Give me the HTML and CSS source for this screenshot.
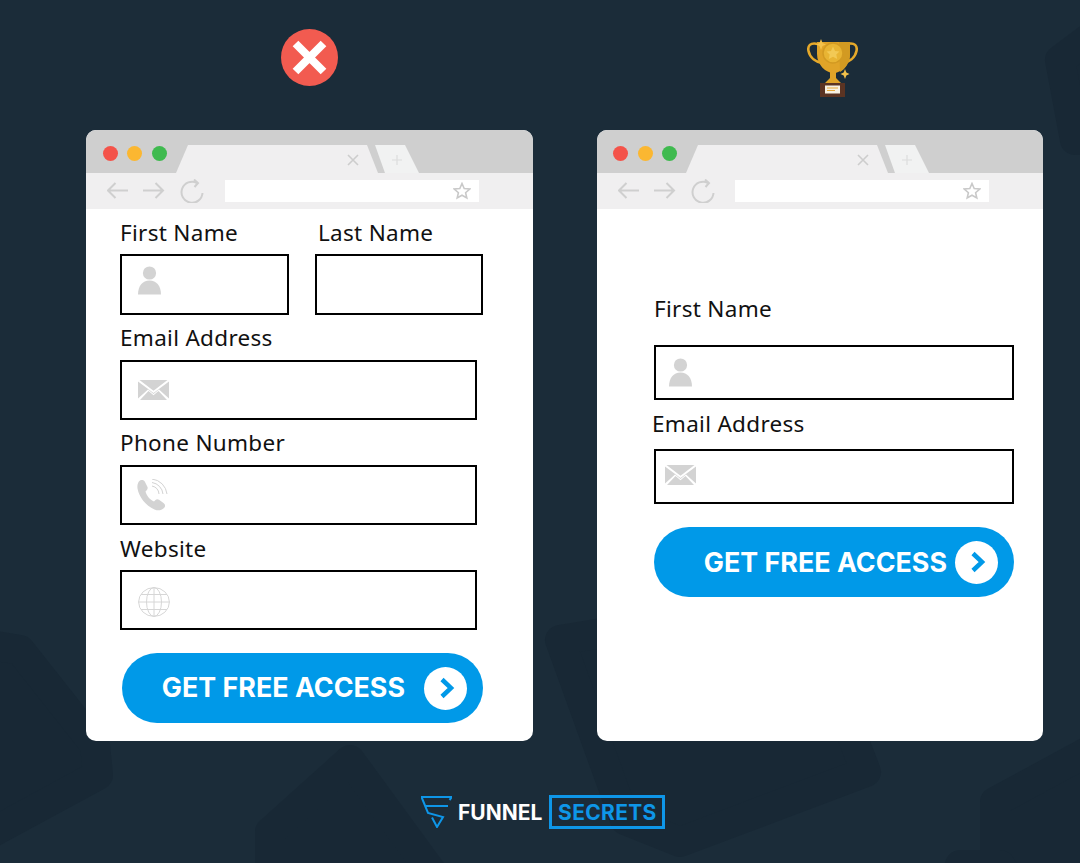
FILE: index.html
```html
<!DOCTYPE html>
<html lang="en">
<head>
  <meta charset="UTF-8">
  <title>Funnel Secrets - Short forms win</title>
  <link rel="stylesheet" href="styles.css">
</head>
<body>
  <!-- Shared icons -->
  <svg class="sprites" width="0" height="0">
    <symbol id="i-person" viewBox="0 0 23 29">
      <circle cx="11.5" cy="7" r="6.6" fill="#d3d3d3"/>
      <path d="M0 28.5C0 20 4.500 14.500 11.500 14.500S23 20 23 28.500Z" fill="#d3d3d3"/>
    </symbol>
    <symbol id="i-mail" viewBox="0 0 31 20">
      <path d="M0 1.500L15.500 13 31 1.500V18.500L21 9.500 15.500 14 10 9.500 0 18.500Z M1.500 0H29.500L15.500 10.800Z M2 20L10.500 11 15.500 15.200 20.500 11 29 20Z" fill="#d3d3d3"/>
    </symbol>
    <symbol id="i-phone" viewBox="0 0 31 32">
      <path d="M3 1.500C5 .5 7 1 8 3L10.500 8C11 9.500 10.500 10.500 9.500 11.500L8.500 12.500C9.500 16.500 13 21 17 22.500L18.500 21C19.500 20 21 20 22 20.800L26.500 24C28.500 25.500 28.500 27.500 27 29C24.500 31.500 21 32 17.500 30.500C8.500 26.500 2 18 .5 9.500C0 6 1 3 3 1.500Z" fill="#d3d3d3"/>
      <path d="M15 7A9 9 0 0 1 22 15M15 3.500A13 13 0 0 1 26 15M15 0A17 17 0 0 1 30 15" fill="none" stroke="#d3d3d3" stroke-width="1"/>
    </symbol>
    <symbol id="i-globe" viewBox="0 0 32 30">
      <g fill="none" stroke="#d6d6d6" stroke-width="1">
        <ellipse cx="16" cy="15" rx="15.400" ry="14.400"/>
        <ellipse cx="16" cy="15" rx="7.500" ry="14.400"/>
        <path d="M16 .5V29.500M.6 15H31.400M3 7.500H29M3 22.500H29"/>
      </g>
    </symbol>
    <symbol id="i-chrome-nav" viewBox="0 0 100 24">
      <g fill="none" stroke="#cfcfcf" stroke-width="2">
        <path d="M1 11.500H21M8.500 4L1 11.500 8.500 19"/>
        <path d="M36 11.500H56M48.500 4L56 11.500 48.500 19"/>
        <path d="M90 4A10.500 10.500 0 1 0 95.500 14"/>
        <path d="M87 .5L91 4 87.500 8"/>
      </g>
    </symbol>
    <symbol id="i-star" viewBox="0 0 18 18">
      <path d="M9 1.500L11.200 6.500 16.700 7 12.600 10.700 13.800 16 9 13.200 4.200 16 5.400 10.700 1.300 7 6.800 6.500Z" fill="none" stroke="#c9c9c9" stroke-width="1.600"/>
    </symbol>
    <symbol id="i-tabs" viewBox="0 0 245 28">
      <path d="M0 28L12 0H191L202 28Z" fill="#f0eff0"/>
      <path d="M172 10L182 20M182 10L172 20" stroke="#cdcdcd" stroke-width="1.600"/>
      <path d="M199 0H229L243 28H209Z" fill="#f1f2f2"/>
      <path d="M221 10V20M216 15H226" stroke="#dcdcdc" stroke-width="1.200"/>
    </symbol>
    <symbol id="i-chevron" viewBox="0 0 16 22">
      <path d="M3 2.500L12 11 3 19.500" fill="none" stroke="#0099e8" stroke-width="4.500"/>
    </symbol>
  </svg>

  <!-- Faint shapes behind everything -->
  <svg class="backdrop" viewBox="0 0 1080 863" aria-hidden="true">
    <g fill="#182835" stroke="#182835" stroke-width="30" stroke-linejoin="round">
      <polygon points="-40,640 20,650 95,745 98,775 -40,850"/>
      <polygon points="350,760 445,890 270,890 270,832"/>
      <polygon points="560,640 800,600 866,772 680,842 625,820"/>
      <polygon points="1100,745 995,802 995,890 1100,890"/>
      <polygon points="955,880 960,865 1000,865 1010,880"/>
      <polygon points="1100,30 1060,60 1075,140 1100,140"/>
    </g>
  </svg>

  <div class="page">
    <div class="verdicts">
      <div class="verdict">
        <svg class="bad-mark" viewBox="0 0 57 57">
          <circle cx="28.500" cy="28.500" r="28.500" fill="#f25b50"/>
          <path d="M14.500 14.500L42.500 42.500M42.500 14.500L14.500 42.500" stroke="#fff" stroke-width="8"/>
        </svg>
      </div>
      <div class="verdict">
        <svg class="trophy" viewBox="0 0 51 58">
          <path d="M11 5C3 3 .5 7 1.500 12 3 19 9 23 15 24M40 5C48 3 50.500 7 49.500 12 48 19 42 23 36 24" fill="none" stroke="#e6a92a" stroke-width="2.600"/>
          <path d="M10 3H43V15C43 26 34 34 26.500 34S10 26 10 15Z" fill="#e0a428"/>
          <path d="M32 3H43V15C43 24 38 30 33 33Z" fill="#d29a22"/>
          <circle cx="26" cy="14" r="10" fill="#e8b433" stroke="#d29a22" stroke-width="1.500"/>
          <path d="M26 7.500L28 12 32.500 12.500 29.300 15.500 30.200 20 26 17.800 21.800 20 22.700 15.500 19.500 12.500 24 12Z" fill="#f2c955"/>
          <path d="M14 0L15.500 4 19 5.500 15.500 7 14 11 12.500 7 9 5.500 12.500 4Z" fill="#f3c14a"/>
          <path d="M23 33H29V39L34 44H18L23 39Z" fill="#e0a428"/>
          <path d="M38 30L39.300 33.500 42.500 35 39.300 36.500 38 40 36.700 36.500 33.500 35 36.700 33.500Z" fill="#f3c14a"/>
          <rect x="13" y="44" width="25" height="14" fill="#5b3423"/>
          <rect x="18" y="46.500" width="15" height="8" fill="#f7f1e3"/>
          <path d="M20 49H31M20 51.500H28" stroke="#e8a93a" stroke-width="1.200"/>
        </svg>
      </div>
    </div>

    <div class="windows">
      <!-- Long form -->
      <section class="window">
        <div class="tabstrip">
          <span class="dot dot-red"></span>
          <span class="dot dot-yellow"></span>
          <span class="dot dot-green"></span>
          <svg class="tabs"><use href="#i-tabs"/></svg>
        </div>
        <div class="toolbar">
          <svg class="nav-icons"><use href="#i-chrome-nav"/></svg>
          <div class="address"><svg class="star"><use href="#i-star"/></svg></div>
        </div>
        <div class="body body-long">
          <div class="name-row">
            <div>
              <div class="label">First Name</div>
              <div class="box box-name"><svg class="icon icon-person"><use href="#i-person"/></svg></div>
            </div>
            <div>
              <div class="label label-last">Last Name</div>
              <div class="box box-name"></div>
            </div>
          </div>
          <div class="label">Email Address</div>
          <div class="box box-wide"><svg class="icon icon-mail"><use href="#i-mail"/></svg></div>
          <div class="label">Phone Number</div>
          <div class="box box-wide"><svg class="icon icon-phone"><use href="#i-phone"/></svg></div>
          <div class="label label-site">Website</div>
          <div class="box box-wide"><svg class="icon icon-globe"><use href="#i-globe"/></svg></div>
          <div class="cta cta-long">
            <span class="cta-text">GET FREE ACCESS</span>
            <span class="cta-arrow"><svg class="chevron"><use href="#i-chevron"/></svg></span>
          </div>
        </div>
      </section>

      <!-- Short form -->
      <section class="window window-short">
        <div class="tabstrip">
          <span class="dot dot-red"></span>
          <span class="dot dot-yellow"></span>
          <span class="dot dot-green"></span>
          <svg class="tabs"><use href="#i-tabs"/></svg>
        </div>
        <div class="toolbar">
          <svg class="nav-icons"><use href="#i-chrome-nav"/></svg>
          <div class="address"><svg class="star"><use href="#i-star"/></svg></div>
        </div>
        <div class="body body-short">
          <div class="label label-first">First Name</div>
          <div class="box box-short"><svg class="icon icon-person-short"><use href="#i-person"/></svg></div>
          <div class="label label-email">Email Address</div>
          <div class="box box-short"><svg class="icon icon-mail-short"><use href="#i-mail"/></svg></div>
          <div class="cta cta-short">
            <span>GET FREE ACCESS</span>
            <span class="cta-arrow"><svg class="chevron"><use href="#i-chevron"/></svg></span>
          </div>
        </div>
      </section>
    </div>

    <footer class="brand">
      <svg class="brand-mark" viewBox="0 0 31 32">
        <g fill="none" stroke="#0e96e8" stroke-width="2">
          <path d="M0 1H31L28.500 4"/>
          <path d="M.5 1L7 17 22 21 16 31 11 21.500"/>
          <path d="M5 10H27"/>
        </g>
      </svg>
      <span class="brand-funnel">FUNNEL</span>
      <span class="brand-secrets">SECRETS</span>
    </footer>
  </div>
</body>
</html>
```

FILE: styles.css
```css
* {
  box-sizing: border-box;
  margin: 0;
  padding: 0;
}

body {
  width: 1080px;
  height: 863px;
  overflow: hidden;
  position: relative;
  background: #1b2c39;
  font-family: "Noto Sans", sans-serif;
  color: #111;
}

.sprites {
  position: absolute;
}

.backdrop {
  position: absolute;
  top: 0;
  left: 0;
  width: 1080px;
  height: 863px;
}

.page {
  position: relative;
  padding: 29px 37px 0 86px;
}

.verdicts {
  display: grid;
  grid-template-columns: 447px 446.500px;
  column-gap: 63.500px;
  height: 101px;
}

.verdict {
  display: flex;
  justify-content: center;
  align-items: flex-start;
}

.bad-mark {
  width: 57px;
  height: 57px;
}

.trophy {
  width: 51px;
  height: 58px;
  margin: 10px 0 0 25px;
}

.windows {
  display: grid;
  grid-template-columns: 447px 446.500px;
  column-gap: 63.500px;
}

.window {
  height: 611px;
  background: #fff;
  border-radius: 10px;
  overflow: hidden;
}

.tabstrip {
  height: 43px;
  background: #cfcfcf;
  display: flex;
  align-items: flex-start;
  padding: 16px 0 0 16.800px;
  gap: 9.400px;
}

.dot {
  width: 15px;
  height: 15px;
  border-radius: 50%;
}

.dot-red { background: #f4534a; }
.dot-yellow { background: #fbb731; }
.dot-green { background: #3fba4f; }

.tabs {
  width: 245px;
  height: 28px;
  margin: -1px 0 0 0;
}

.toolbar {
  height: 36px;
  background: #f0eff0;
  display: flex;
  align-items: center;
  padding-left: 21px;
}

.nav-icons {
  width: 100px;
  height: 24px;
}

.address {
  width: 254px;
  height: 22px;
  margin-left: 18px;
  background: #fff;
  display: flex;
  justify-content: flex-end;
  align-items: center;
  padding-right: 8px;
}

.window-short .address {
  margin-left: 17.500px;
}

.star {
  width: 18px;
  height: 18px;
}

.label {
  font-size: 22.500px;
  line-height: 24px;
  letter-spacing: 0.3px;
}

.box {
  border: 2px solid #000;
  height: 60px;
  display: flex;
  align-items: center;
}

.icon {
  flex: none;
}

/* long form */
.body-long {
  padding: 12px 0 0 34px;
}

.name-row {
  display: grid;
  grid-template-columns: 169px 168px;
  column-gap: 26px;
}

.name-row .label {
  margin-bottom: 9px;
}

.box-name {
  height: 61px;
}

.label-last {
  padding-left: 3px;
}

.body-long > .label {
  margin: 11px 0 10px;
}

.body-long > .label-site {
  margin: 12px 0 9px;
}

.box-wide {
  width: 357px;
}

.icon-person {
  width: 23px;
  height: 29px;
  margin: -8px 0 0 16px;
}

.icon-mail {
  width: 31px;
  height: 20px;
  margin-left: 16px;
}

.icon-phone {
  width: 31px;
  height: 32px;
  margin-left: 15px;
}

.icon-globe {
  width: 32px;
  height: 30px;
  margin: 4px 0 0 16px;
}

/* short form */
.body-short {
  padding: 88px 0 0 57.500px;
}

.label-first {
  margin-bottom: 24px;
}

.label-email {
  margin: 12px 0 13px -2px;
}

.box-short {
  width: 360px;
  height: 55px;
}

.icon-person-short {
  width: 23px;
  height: 29px;
  margin-left: 13px;
}

.icon-mail-short {
  width: 31px;
  height: 20px;
  margin: -3px 0 0 9px;
}

/* button */
.cta {
  height: 70px;
  border-radius: 35px;
  background: #0099e8;
  color: #fff;
  font-family: Inter, sans-serif;
  font-weight: 700;
  font-size: 26.850px;
  display: flex;
  justify-content: flex-end;
  align-items: center;
  padding-right: 16px;
}

.cta-long {
  width: 361px;
  margin: 23px 0 0 2px;
  gap: 19px;
}

.cta-text {
  margin-top: -2px;
}

.cta-short {
  width: 360px;
  margin-top: 23px;
  gap: 8px;
}

.cta-arrow {
  width: 43px;
  height: 43px;
  border-radius: 50%;
  background: #fff;
  display: flex;
  justify-content: center;
  align-items: center;
}

.chevron {
  width: 16px;
  height: 22px;
  margin-left: 3px;
}

/* logo */
.brand {
  margin: 54px 0 0 335px;
  display: flex;
  align-items: center;
  font-family: Inter, sans-serif;
  font-weight: 700;
  font-size: 21px;
}

.brand-mark {
  width: 31px;
  height: 32px;
  margin-right: 6px;
}

.brand-funnel {
  color: #fff;
  margin-right: 7px;
}

.brand-secrets {
  width: 116px;
  height: 34px;
  border: 3px solid #0e96e8;
  color: #0e96e8;
  letter-spacing: 0.3px;
  display: flex;
  align-items: center;
  justify-content: center;
}
```
